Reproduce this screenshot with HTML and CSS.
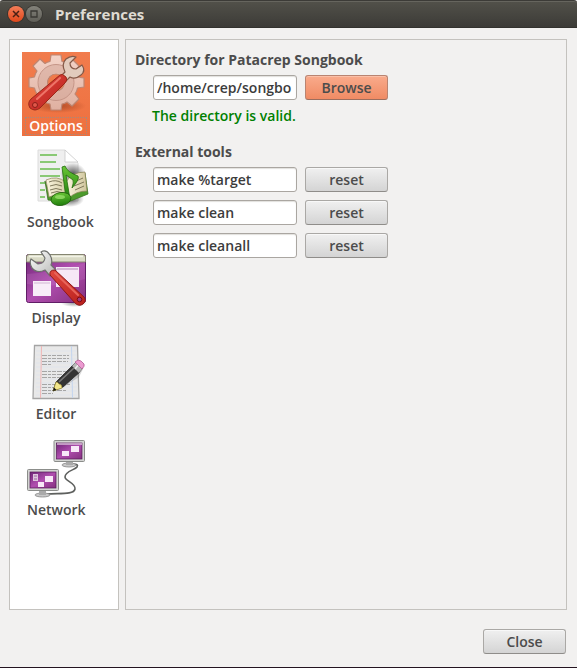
FILE: index.html
```html
<!DOCTYPE html>
<html lang="en">
<head>
<meta charset="utf-8">
<title>Preferences</title>
<link rel="stylesheet" href="styles.css">
</head>
<body>
<div class="window">
  <header class="titlebar">
    <button class="wm wm-close" type="button" aria-label="Close window"><svg viewBox="0 0 16 16"><path d="M5 5l6 6M11 5l-6 6" stroke="#4a2014" stroke-width="1.5"/></svg></button>
    <button class="wm wm-max" type="button" aria-label="Maximize"><svg viewBox="0 0 16 16"><path d="M5 5h6v6h-6z" fill="none" stroke="#3a3934" stroke-width="1.3"/></svg></button>
    <h1 class="title">Preferences</h1>
  </header>
  <div class="content">
    <nav class="sidebar">
      <button class="item selected" type="button">
        <svg class="icon" viewBox="0 0 64 64">
          <defs>
            <linearGradient id="red" x1="0" y1="0" x2="1" y2="1"><stop offset="0" stop-color="#e2493f"/><stop offset="1" stop-color="#b81f1c"/></linearGradient>
            <linearGradient id="gear" x1="0" y1="0" x2="0" y2="1"><stop offset="0" stop-color="#f3d3c8"/><stop offset="1" stop-color="#dfb0a0"/></linearGradient>
            <radialGradient id="shade"><stop offset="0" stop-color="#8a3415" stop-opacity=".6"/><stop offset="1" stop-color="#8a3415" stop-opacity="0"/></radialGradient>
          </defs>
          <ellipse cx="34" cy="54" rx="28" ry="7" fill="url(#shade)"/>
          <path fill="url(#gear)" stroke="#bd8672" stroke-width="1.2" stroke-linejoin="round" fill-rule="evenodd" d="M27 3H37L38 9.500Q41 10 43 11.500L48 7L55 14L51 19Q53 22 53.500 25L60 26V35L53.500 36Q53 39 51 42L55 47L48 54L43 50Q41 51.500 38 52L37 58H27L26 52Q23 51.500 21 50L16 54L9 47L13 42Q11 39 10.500 36L5 35V26L10.500 25Q11 22 13 19L9 14L16 7L21 11.500Q23 10 26 9.500ZM32 22A8.500 8.500 0 1 0 32 39A8.500 8.500 0 1 0 32 22Z"/>
          <circle cx="32" cy="30.500" r="13.500" fill="none" stroke="#d2a598" stroke-width="8.500" opacity=".5"/>
          <circle cx="32" cy="30.500" r="18" fill="none" stroke="#c59587" stroke-width="1"/>
          <path d="M37 24L41 20Q37 12 42 7Q47 3 52 5L46 11Q46 17 52 17L58 13Q62 19 57 23Q51 28 46 25L42 29Z" fill="#e2cbbd" stroke="#845847" stroke-width="1.200" stroke-linejoin="round"/>
          <path d="M36 23Q38 21 42 25Q44 28 41 31L16 56Q11 60 6 56Q3 51 7 47Z" fill="url(#red)" stroke="#9b2818" stroke-width="1"/>
          <path d="M36 26L13 47" stroke="#ee7468" stroke-width="2" stroke-linecap="round"/>
          <circle cx="11" cy="53" r="2.500" fill="#df584a" stroke="#8b1f18"/>
        </svg>
        <span class="label">Options</span>
      </button>
      <button class="item" type="button">
        <svg class="icon" viewBox="0 0 64 64">
          <defs>
            <linearGradient id="note" x1="0" y1="0" x2="0" y2="1"><stop offset="0" stop-color="#69c636"/><stop offset="1" stop-color="#1f7d0c"/></linearGradient>
            <linearGradient id="page" x1="0" y1="0" x2="1" y2="0"><stop offset="0" stop-color="#fbf6df"/><stop offset="1" stop-color="#cfc59c"/></linearGradient>
            <radialGradient id="dark"><stop offset="0" stop-color="#222" stop-opacity=".75"/><stop offset="1" stop-color="#222" stop-opacity="0"/></radialGradient>
          </defs>
          <path d="M10 2H37L50 15V53H10Z" fill="#efefef" stroke="#dcdcdc" stroke-width="1"/>
          <path d="M37 2V14H50Z" fill="#fff" stroke="#c9c9c9" stroke-width=".8"/>
          <path d="M12 7H29M12 14H28M12 21H32M12 28H32M12 35H17M12 42H17M12 49H17" stroke="#69bd4e" stroke-width="1.500"/>
          <ellipse cx="45" cy="26" rx="13" ry="11" fill="url(#dark)"/>
          <ellipse cx="42" cy="51" rx="14" ry="8" fill="url(#dark)"/>
          <path d="M17 33L20 52L40 54L60 46L57 25L52 25L53 42L39 48L22 47Z" fill="#4c9a2b" stroke="#39721f" stroke-width=".8"/>
          <path d="M18 32Q29 27 38 34L41 50Q32 44 21 49Z" fill="url(#page)" stroke="#8c8259" stroke-width=".7"/>
          <path d="M38 34Q44 24 57 24L59 43Q48 43 41 50Z" fill="url(#page)" stroke="#8c8259" stroke-width=".7"/>
          <path d="M21 34Q28 31 34 35M22 38Q28 35 34 38M22 42Q28 39 34 42M23 45Q29 42 35 45M46 34L55 30M46 38L56 34M47 42L56 38" fill="none" stroke="#746d50" stroke-width=".9"/>
          <path d="M34 19L37 18Q39 24 50 28Q52 31 44 40Q46 34 45 32Q41 29 38 27L42 51H38Z" fill="url(#note)" stroke="#236d0e" stroke-width=".8"/>
          <ellipse cx="33" cy="51" rx="10" ry="6.500" transform="rotate(-8 33 51)" fill="url(#note)" stroke="#1c5c0a" stroke-width=".8"/>
          <ellipse cx="32" cy="49" rx="5" ry="2" fill="#a1e570" opacity=".7"/>
        </svg>
        <span class="label">Songbook</span>
      </button>
      <button class="item" type="button">
        <svg class="icon" viewBox="0 0 64 64">
          <defs>
            <linearGradient id="purple" x1="0" y1="0" x2="1" y2="1"><stop offset="0" stop-color="#6f2577"/><stop offset=".5" stop-color="#b04eaf"/><stop offset="1" stop-color="#84307f"/></linearGradient>
            <linearGradient id="steel" x1="0" y1="0" x2="1" y2="1"><stop offset="0" stop-color="#fff"/><stop offset="1" stop-color="#b4b6b3"/></linearGradient>
            <radialGradient id="grey"><stop offset="0" stop-color="#333" stop-opacity=".5"/><stop offset="1" stop-color="#333" stop-opacity="0"/></radialGradient>
          </defs>
          <ellipse cx="50" cy="59" rx="13" ry="4" fill="url(#grey)"/>
          <rect x="2.500" y="10.500" width="59" height="48" rx="2" fill="url(#purple)" stroke="#601d66"/>
          <path d="M3 30Q30 28 61 19V35Q30 45 3 40Z" fill="#d48ad4" opacity=".2"/>
          <path d="M2.500 18V13Q2.500 10.500 5 10.500H59Q61.500 10.500 61.500 13V18Z" fill="#d9dac5" stroke="#858671"/>
          <path d="M5 12.500H59" stroke="#f2f3e6" stroke-width="1.500"/>
          <path d="M32 23H55V43H32Z" fill="#f6e8f6"/><path d="M33 25H54" stroke="#c9a9ca" stroke-width="1.500"/>
          <path d="M9 37H27V52H9Z" fill="#f8edf8"/><path d="M10 39H26" stroke="#d1b5d2"/>
          <path d="M17 8Q22 5 26 11Q29 16 27 21L32 26L26 32L21 26Q13 30 8 24Q5 19 7 15L14 20Q20 20 21 14Z" fill="url(#steel)" stroke="#6e706d" stroke-width="1.200" stroke-linejoin="round"/>
          <path d="M26 31Q25 26 31 26L60 53Q63 57 59 60Q55 63 51 59Z" fill="url(#red)" stroke="#8e1818" stroke-width="1"/>
          <path d="M31 29L54 51" stroke="#e8655a" stroke-width="2" stroke-linecap="round"/>
          <circle cx="55.500" cy="55.500" r="2.300" fill="#9c397f" stroke="#7b0d11"/>
        </svg>
        <span class="label">Display</span>
      </button>
      <button class="item" type="button">
        <svg class="icon" viewBox="0 0 64 64">
          <path d="M10.500 5.500H53.500L55 58.500H9Z" fill="#e8e8e8" stroke="#a5a5a5" stroke-width="1.300"/>
          <path d="M12 11H53M12 15H53M12 19H53M12 23H53M12 27H53M12 31H53M12 35H53M12 39H53M12 43H53M12 47H53M12 51H53M12 55H53" stroke="#dce3ed" stroke-width=".7"/>
          <path d="M17.500 6L16.500 58" stroke="#f0b6b6"/><path d="M47.500 6L48.500 58" stroke="#c4d5ee"/>
          <path d="M18 15.500H45M18 18.500H45M18 21.500H44M18 24.500H28M18 31.500H44M18 34.500H43M18 37.500H38M18 44.500H46M18 47.500H32M18 50.500H43M18 53.500H29" stroke="#a6a6a6" stroke-width="1.100" stroke-dasharray="5 1 3 1 4 1"/>
          <path d="M32 52L55 37L59 29L48 40Z" fill="#777" opacity=".3"/>
          <path d="M29 51L32 42L49 25L56 32L39 47Z" fill="#343434" stroke="#1c1c1c" stroke-width=".7"/>
          <path d="M35 42L51 27" stroke="#777" stroke-width="1.700"/>
          <path d="M29 51L32 42Q34 42 35 44Q38 44 38 48Z" fill="#f2e68b" stroke="#9d8e35" stroke-width=".7"/>
          <path d="M29 51L30 47.500L32.500 50Z" fill="#111"/>
          <path d="M48 26L52 22L59 28L55 33Z" fill="#b7b7b7" stroke="#717171" stroke-width=".8"/>
          <path d="M51 29L55 24" stroke="#eee" stroke-width="1.500"/>
          <path d="M51 22L54 20Q57 20 60 24Q61 26 58 29Z" fill="#ec9bd1" stroke="#b25e96" stroke-width=".8"/>
        </svg>
        <span class="label">Editor</span>
      </button>
      <button class="item" type="button">
        <svg class="icon" viewBox="0 0 64 64">
          <path d="M49 28Q55 28 53 31C51 34 41 35 41 41C41 45 52 47 51 53C50 59 35 57 23 58" fill="none" stroke="#5e605e" stroke-width="1.600"/>
          <ellipse cx="45" cy="29" rx="7" ry="2" fill="#c8c8c8" stroke="#888" stroke-width=".8"/>
          <path d="M42 25H49V29H42Z" fill="#aaa"/>
          <rect x="30" y="4.500" width="30.500" height="21" rx="1" fill="#d3d4d2" stroke="#8b8d8a"/>
          <rect x="32.500" y="7" width="25.500" height="16" fill="url(#purple)" stroke="#551956" stroke-width=".7"/>
          <path d="M33 8H58" stroke="#d8bdd9" stroke-width="1.500"/>
          <path d="M47 10H55V16H47ZM38 15H45V20H38Z" fill="#f8e8f8"/>
          <ellipse cx="18.500" cy="59" rx="7.500" ry="2" fill="#c8c8c8" stroke="#888" stroke-width=".8"/>
          <path d="M15 54H22V59H15Z" fill="#aaa"/>
          <rect x="3.500" y="33.500" width="31" height="21" rx="1" fill="#d3d4d2" stroke="#8b8d8a"/>
          <rect x="6" y="36" width="26" height="16" fill="url(#purple)" stroke="#551956" stroke-width=".7"/>
          <path d="M21 40H29V46H21ZM14 46H20V51H14Z" fill="#f8e8f8"/>
          <path d="M9 38H14V45H9Z" fill="#dec5df"/><path d="M10 40H13M10 43H13" stroke="#9a6a9b"/>
        </svg>
        <span class="label">Network</span>
      </button>
    </nav>
    <main class="panel">
      <section class="group">
        <h2 class="heading"><label for="dir">Directory for Patacrep Songbook</label></h2>
        <div class="row"><input id="dir" class="field" type="text" value="/home/crep/songbo"><button class="btn accent" type="button">Browse</button></div>
        <p class="valid">The directory is valid.</p>
      </section>
      <section class="group">
        <h2 class="heading">External tools</h2>
        <div class="rows">
          <div class="row"><input class="field" type="text" value="make %target" aria-label="Build command"><button class="btn" type="button">reset</button></div>
          <div class="row"><input class="field" type="text" value="make clean" aria-label="Clean command"><button class="btn" type="button">reset</button></div>
          <div class="row"><input class="field" type="text" value="make cleanall" aria-label="Clean all command"><button class="btn" type="button">reset</button></div>
        </div>
      </section>
    </main>
  </div>
  <footer class="footer"><button class="btn" type="button">Close</button></footer>
</div>
</body>
</html>
```
FILE: styles.css
```css
* { box-sizing: border-box; }
body {
  margin: 0;
  background: #f2f1f0;
  color: #4c4c4c;
  font: 600 14px/20px "Open Sans", "Noto Sans", sans-serif;
}
button, input { font: inherit; color: inherit; }
h1, h2, p { margin: 0; font: inherit; }
.window {
  min-height: 100vh;
  display: flex;
  flex-direction: column;
  border-bottom: 1px solid #241420;
}
.titlebar {
  height: 28px;
  padding: 0 8px;
  display: flex;
  align-items: center;
  gap: 2px;
  background: linear-gradient(#52514a, #3c3b37);
  border-top: 1px solid #3c3b37;
  border-bottom: 1px solid #33322e;
  box-shadow: inset 0 1px #66655e;
  border-radius: 3px 3px 0 0;
}
.title { margin-left: 11px; color: #dfdbd2; font-size: 15px; font-weight: 700; }
.wm { width: 16px; height: 16px; padding: 0; border: 0; border-radius: 50%; }
.wm svg { display: block; }
.wm-close { background: linear-gradient(#f37d58, #e0481b); box-shadow: 0 0 0 1px #3a342e; }
.wm-max { background: linear-gradient(#83827a, #605f58); box-shadow: 0 0 0 1px #393833; }
.content { flex: 1; display: flex; gap: 6px; padding: 11px 10px 0 9px; }
.sidebar {
  flex: 0 0 110px;
  padding: 12px;
  display: flex;
  flex-direction: column;
  align-items: flex-start;
  gap: 12px;
  background: #fff;
  border: 1px solid #c4c2be;
}
.item {
  min-width: 68px;
  padding: 0;
  display: flex;
  flex-direction: column;
  align-items: center;
  border: 0;
  background: none;
}
.label { padding: 0 5px; }
.item.selected { background: linear-gradient(#f17c4d, #ee703f); color: #fff; }
.selected .label { outline: 1px dotted #a58a7c; outline-offset: -2px; }
.icon { width: 64px; height: 64px; }
.panel {
  flex: 1;
  padding: 10px 9px;
  display: flex;
  flex-direction: column;
  gap: 16px;
  border: 1px solid #c4c2be;
}
.heading { margin-bottom: 5px; font-weight: 700; }
.rows { display: flex; flex-direction: column; gap: 8px; }
.row { display: flex; gap: 8px; padding-left: 18px; }
.field {
  width: 144px;
  height: 25px;
  padding: 0 0 0 3px;
  border: 1px solid #aaa6a1;
  border-radius: 3px;
  background: #fff;
  box-shadow: inset 0 1px 1px #e2e0dd;
  color: #3c3c3c;
}
.valid { margin-top: 6px; padding-left: 17px; color: #008000; }
.btn {
  width: 83px;
  height: 25px;
  padding: 0;
  line-height: 20px;
  border: 1px solid #aaa8a5;
  border-bottom-color: #8f8d8a;
  border-radius: 3px;
  background: linear-gradient(#f0f0f0, #d4d4d4);
  box-shadow: inset 0 1px #f8f8f8;
}
.btn.accent {
  border-color: #b98471;
  border-bottom-color: #9c6e5e;
  background: linear-gradient(#f9ab8c, #f08b64);
  box-shadow: inset 0 1px #fbc0a8;
}
.footer { display: flex; justify-content: flex-end; padding: 19px 11px 13px; }
```
